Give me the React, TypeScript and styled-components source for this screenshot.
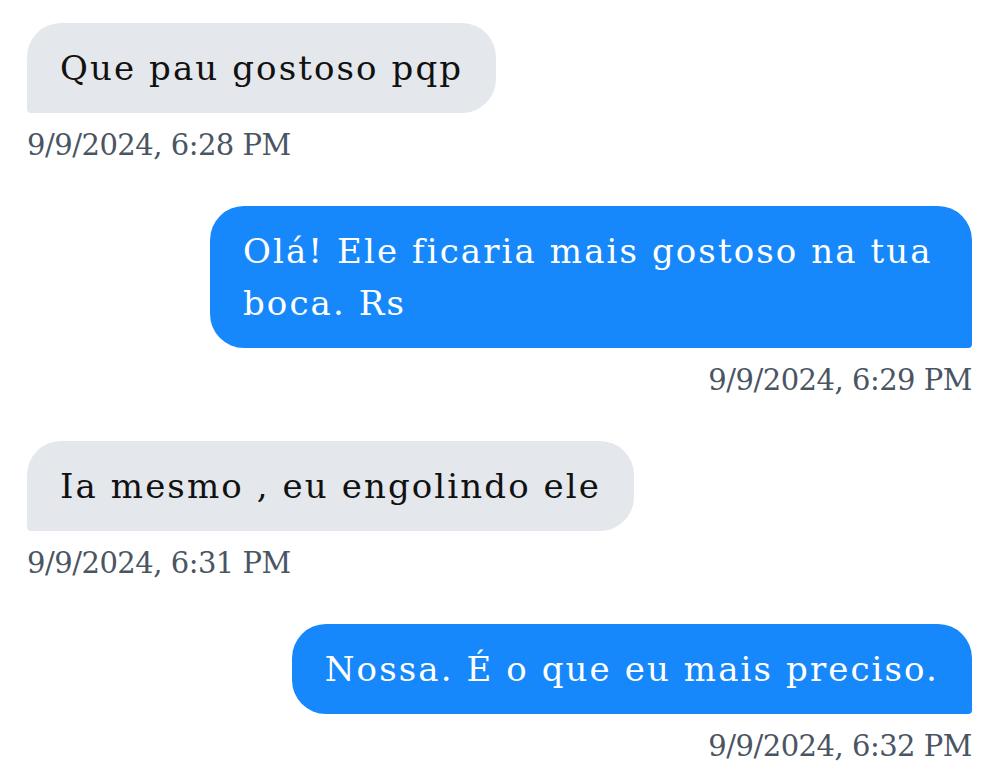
import styled, { createGlobalStyle } from "styled-components";

const GlobalStyle = createGlobalStyle`
  html, body {
    margin: 0;
    padding: 0;
    background: #ffffff;
  }
`;

const Thread = styled.div`
  display: flex;
  flex-direction: column;
  padding: 23px 28px 0 27px;
  font-family: "DejaVu Serif", "Liberation Serif", serif;
`;

const Message = styled.div<{ mine: boolean }>`
  display: flex;
  flex-direction: column;
  align-items: ${(p) => (p.mine ? "flex-end" : "flex-start")};
  margin-bottom: 41px;
`;

const Bubble = styled.div<{ mine: boolean }>`
  max-width: 762px;
  box-sizing: border-box;
  padding: 19px 33px;
  font-size: 34px;
  line-height: 52px;
  letter-spacing: 2.1px;
  color: ${(p) => (p.mine ? "#ffffff" : "#111111")};
  background: ${(p) => (p.mine ? "#1688fb" : "#e4e7eb")};
  border-radius: ${(p) => (p.mine ? "34px 34px 4px 34px" : "34px 34px 34px 4px")};
`;

const Stamp = styled.div`
  margin-top: 12px;
  font-size: 29px;
  line-height: 40px;
  letter-spacing: -0.5px;
  color: #4a5563;
`;

const messages = [
  { mine: false, text: "Que pau gostoso pqp", time: "9/9/2024, 6:28 PM" },
  {
    mine: true,
    text: "Olá! Ele ficaria mais gostoso na tua boca. Rs",
    time: "9/9/2024, 6:29 PM",
  },
  { mine: false, text: "Ia mesmo , eu engolindo ele", time: "9/9/2024, 6:31 PM" },
  { mine: true, text: "Nossa. É o que eu mais preciso.", time: "9/9/2024, 6:32 PM" },
];

const App = () => {
  return (
    <>
      <GlobalStyle />
      <Thread>
        {messages.map((m) => (
          <Message key={m.time} mine={m.mine}>
            <Bubble mine={m.mine}>{m.text}</Bubble>
            <Stamp>{m.time}</Stamp>
          </Message>
        ))}
      </Thread>
    </>
  );
};

export default App;
